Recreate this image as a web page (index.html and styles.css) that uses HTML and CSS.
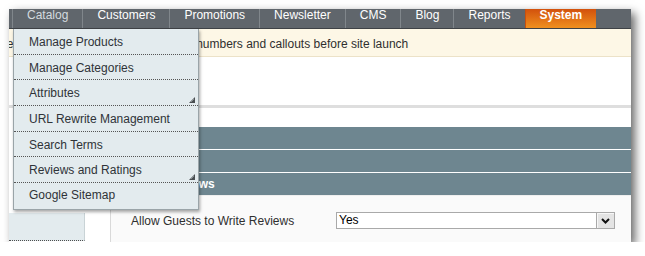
FILE: index.html
```html
<!DOCTYPE html>
<html lang="en">
<head>
<meta charset="utf-8">
<title>Magento Admin</title>
<link rel="stylesheet" href="styles.css">
</head>
<body>
<div class="window">
  <nav class="nav">
    <ul class="nav-list">
      <li class="nav-item is-hover">Catalog</li>
      <li class="nav-item">Customers</li>
      <li class="nav-item">Promotions</li>
      <li class="nav-item">Newsletter</li>
      <li class="nav-item">CMS</li>
      <li class="nav-item">Blog</li>
      <li class="nav-item">Reports</li>
      <li class="nav-item is-active">System</li>
    </ul>
  </nav>
  <div class="notice">Please provide the customer service desk phone numbers and callouts before site launch</div>
  <div class="page-head"></div>
  <div class="rule"></div>
  <div class="main">
    <aside class="side">
      <div class="side-tab"></div>
    </aside>
    <div class="gutter"></div>
    <section class="content">
      <div class="bar">Frontend</div>
      <div class="bar">Sitemap</div>
      <div class="bar">Product Reviews</div>
      <div class="fieldset">
        <div class="row">
          <label class="row-label">Allow Guests to Write Reviews</label>
          <div class="select">
            <span class="select-value">Yes</span>
            <span class="select-btn">
              <svg width="9" height="6" viewBox="0 0 9 6"><path d="M1 1 L4.5 4.5 L8 1" fill="none" stroke="#111" stroke-width="2"/></svg>
            </span>
          </div>
        </div>
      </div>
    </section>
  </div>

  <ul class="dropdown">
    <li class="dd-item">Manage Products</li>
    <li class="dd-item">Manage Categories</li>
    <li class="dd-item">Attributes
      <svg class="dd-arrow" width="7" height="6" viewBox="0 0 7 6"><path d="M0 6 L6 0 L6 6 Z" fill="#4a4f52"/><path d="M2 5 L5 2" stroke="#9aa3a7" stroke-width="0.8"/></svg>
    </li>
    <li class="dd-item">URL Rewrite Management</li>
    <li class="dd-item">Search Terms</li>
    <li class="dd-item">Reviews and Ratings
      <svg class="dd-arrow" width="7" height="6" viewBox="0 0 7 6"><path d="M0 6 L6 0 L6 6 Z" fill="#4a4f52"/><path d="M2 5 L5 2" stroke="#9aa3a7" stroke-width="0.8"/></svg>
    </li>
    <li class="dd-item">Google Sitemap</li>
  </ul>
</div>
</body>
</html>
```
FILE: styles.css
```css
* { box-sizing: border-box; }
html, body { margin: 0; padding: 0; background: #ffffff; }
body {
  font-family: "Liberation Sans", Arial, sans-serif;
  font-size: 12px;
  color: #2f2f2f;
}
.window {
  position: relative;
  margin: 9px 0 0 9px;
  width: 622px;
  height: 233px;
  background: #ffffff;
  overflow: hidden;
  box-shadow: 4px 4px 9px rgba(0, 0, 0, 0.6);
  display: flex;
  flex-direction: column;
}
.nav {
  height: 20px;
  background: #60666c;
  border-bottom: 1px solid #3e4246;
  flex: none;
}
.nav-list {
  list-style: none;
  margin: 0;
  padding: 0 0 0 3px;
  display: flex;
  height: 19px;
}
.nav-item {
  padding: 0 14px;
  line-height: 13px;
  color: #ffffff;
  border-left: 1px solid #80868b;
  height: 19px;
  white-space: nowrap;
}
.nav-item.is-hover { color: #d3dadf; }
.nav-item.is-active {
  font-weight: bold;
  border-left-color: #c9500d;
  background: linear-gradient(#d2510c, #f0901f);
}
.notice {
  flex: none;
  height: 28px;
  background: #fdf7e6;
  border-bottom: 1px solid #ece2c8;
  padding-top: 3px;
  line-height: 24px;
  text-indent: -75px;
  white-space: nowrap;
  color: #2f2f2f;
}
.page-head { flex: none; height: 48px; background: #ffffff; }
.rule { flex: none; height: 3px; background: #dedede; }
.main {
  flex: 1;
  display: flex;
  min-height: 0;
}
.side {
  width: 76px;
  flex: none;
  display: flex;
  flex-direction: column;
  justify-content: flex-end;
  padding-bottom: 1px;
}
.side-tab {
  height: 28px;
  background: #e3ebee;
  border-right: 1px solid #c9d3d6;
  border-bottom: 1px dotted #4d4d4d;
}
.gutter { width: 25px; flex: none; }
.content {
  flex: 1;
  display: flex;
  flex-direction: column;
  padding-top: 19px;
}
.bar {
  height: 22px;
  line-height: 22px;
  background: #6e8690;
  color: #ffffff;
  font-weight: bold;
  padding-left: 8px;
  margin-bottom: 1px;
  white-space: nowrap;
}
.fieldset {
  flex: 1;
  margin-top: -1px;
  background: #fafafa;
  border-left: 1px solid #d9d9d9;
  border-top: 1px solid #eeeeee;
}
.row {
  display: flex;
  align-items: center;
  padding: 16px 0 0 20px;
}
.row-label {
  width: 205px;
  flex: none;
  color: #2f2f2f;
}
.select {
  width: 279px;
  height: 17px;
  border: 1px solid #a9a9a9;
  background: #ffffff;
  display: flex;
  align-items: stretch;
}
.select-value {
  flex: 1;
  padding-left: 2px;
  line-height: 15px;
  color: #000000;
}
.select-btn {
  width: 18px;
  flex: none;
  background: #e4e4e4;
  border-left: 1px solid #a9a9a9;
  box-shadow: inset 1px 1px 0 #f7f7f7;
  display: flex;
  align-items: center;
  justify-content: center;
}
.dropdown {
  position: absolute;
  left: 4px;
  top: 20px;
  width: 186px;
  margin: 0;
  padding: 0;
  list-style: none;
  background: #e3ebee;
  border: 1px solid #9aa4a8;
  border-top: none;
  box-shadow: 1px 2px 3px rgba(0, 0, 0, 0.35);
}
.dd-item {
  position: relative;
  height: 25.7px;
  line-height: 24.7px;
  padding: 1px 0 0 15px;
  border-bottom: 1px dotted #555555;
  color: #2f3338;
  white-space: nowrap;
}
.dd-item:last-child { border-bottom: none; line-height: 25.7px; padding-top: 0; }
.dd-arrow {
  position: absolute;
  right: 2px;
  bottom: 2px;
}
```
